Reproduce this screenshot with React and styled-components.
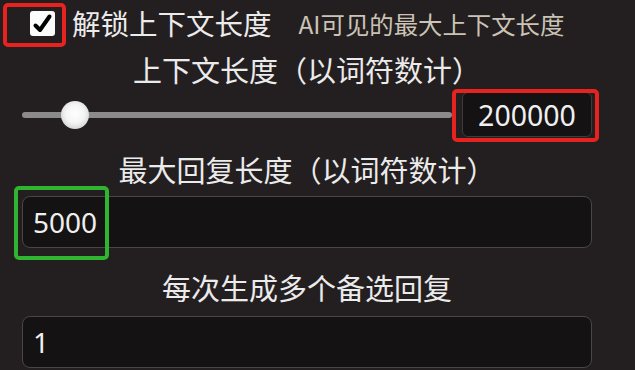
import React from "react";
import styled, { createGlobalStyle } from "styled-components";

const Global = createGlobalStyle`
  html, body { margin: 0; padding: 0; background: #231f20; }
  body { font-family: "Noto Sans", "Noto Sans CJK SC", sans-serif; color: #e6e4e4; overflow: hidden; }
  * { box-sizing: border-box; }
`;

const Panel = styled.div`
  width: 635px;
  padding: 0 43px 0 22px;
  display: flex;
  flex-direction: column;
  & > * { flex: none; }
`;

const CheckRow = styled.div`
  position: relative;
  height: 46px;
  display: flex;
  align-items: center;
  padding-left: 8px;
`;

const CheckBox = styled.span`
  width: 25px;
  height: 25px;
  border-radius: 3px;
  background: #fbfbfb;
  display: inline-flex;
  align-items: center;
  justify-content: center;
  flex: none;
`;

const CheckLabel = styled.span`
  margin-left: 17px;
  font-size: 28.5px;
  font-family: "Noto Sans CJK SC", sans-serif;
  color: #ecebeb;
  line-height: 40px;
`;

const Hint = styled.span`
  margin-left: 27px;
  font-size: 24.4px;
  font-family: "Noto Sans CJK SC", sans-serif;
  color: #cbc4b6;
  line-height: 40px;
  margin-top: 1px;
`;

const Highlight = styled.div`
  position: absolute;
  border: 4px solid ${(p) => p.$color};
  border-radius: 5px;
  pointer-events: none;
`;

const Title = styled.div`
  margin-top: ${(p) => p.$mt}px;
  height: 36px;
  line-height: 36px;
  text-align: center;
  font-size: 29px;
  font-family: "Noto Sans CJK SC", sans-serif;
  color: #ecebeb;
`;

const SliderRow = styled.div`
  margin-top: 5px;
  display: flex;
  align-items: center;
  gap: 10px;
  height: 45px;
`;

const Track = styled.div`
  position: relative;
  flex: 1;
  height: 6px;
  border-radius: 3px;
  background: #8c8a8a;
`;

const Thumb = styled.div`
  position: absolute;
  top: 50%;
  width: 28px;
  height: 28px;
  margin: -14px 0 0 -14px;
  border-radius: 50%;
  background: radial-gradient(circle at 50% 45%, #ffffff 0%, #f4f4f4 45%, #bdbdbd 100%);
`;

const NumberWrap = styled.div`
  position: relative;
  width: 130px;
  height: 45px;
  flex: none;
`;

const NumberBox = styled.div`
  width: 100%;
  height: 100%;
  border: 1px solid #3f3b3c;
  border-radius: 6px;
  background: #141213;
  display: flex;
  align-items: center;
  justify-content: center;
  font-size: 28.5px;
  color: #efefef;
`;

const FieldWrap = styled.div`
  position: relative;
  margin-top: ${(p) => p.$mt}px;
`;

const Field = styled.div`
  height: 52px;
  border: 1px solid #4a4647;
  border-radius: 8px;
  background: #151213;
  display: flex;
  align-items: center;
  padding-left: 10px;
  font-size: 28px;
  color: #efefef;
`;

export default function App() {
  return (
    <>
      <Global />
      <Panel>
        <CheckRow>
          <CheckBox>
            <svg width="25" height="25" viewBox="0 0 25 25">
              <path d="M5.5 14.5 L10 19 L19.5 5.5" fill="none" stroke="#000" strokeWidth="4" strokeLinecap="round" strokeLinejoin="round" />
            </svg>
          </CheckBox>
          <CheckLabel>解锁上下文长度</CheckLabel>
          <Hint>AI可见的最大上下文长度</Hint>
          <Highlight $color="#e8231f" style={{ left: -19, top: 3, width: 63, height: 44 }} />
        </CheckRow>

        <Title $mt={5}>上下文长度（以词符数计）</Title>

        <SliderRow>
          <Track>
            <Thumb style={{ left: "12.3%" }} />
          </Track>
          <NumberWrap>
            <NumberBox>200000</NumberBox>
            <Highlight $color="#e8231f" style={{ left: -10, top: -3, width: 147, height: 53 }} />
          </NumberWrap>
        </SliderRow>

        <Title $mt={14}>最大回复长度（以词符数计）</Title>

        <FieldWrap $mt={9}>
          <Field>5000</Field>
          <Highlight $color="#2fb52f" style={{ left: -8, top: -10, width: 95, height: 74 }} />
        </FieldWrap>

        <Title $mt={21}>每次生成多个备选回复</Title>

        <FieldWrap $mt={11}>
          <Field>1</Field>
        </FieldWrap>
      </Panel>
    </>
  );
}
